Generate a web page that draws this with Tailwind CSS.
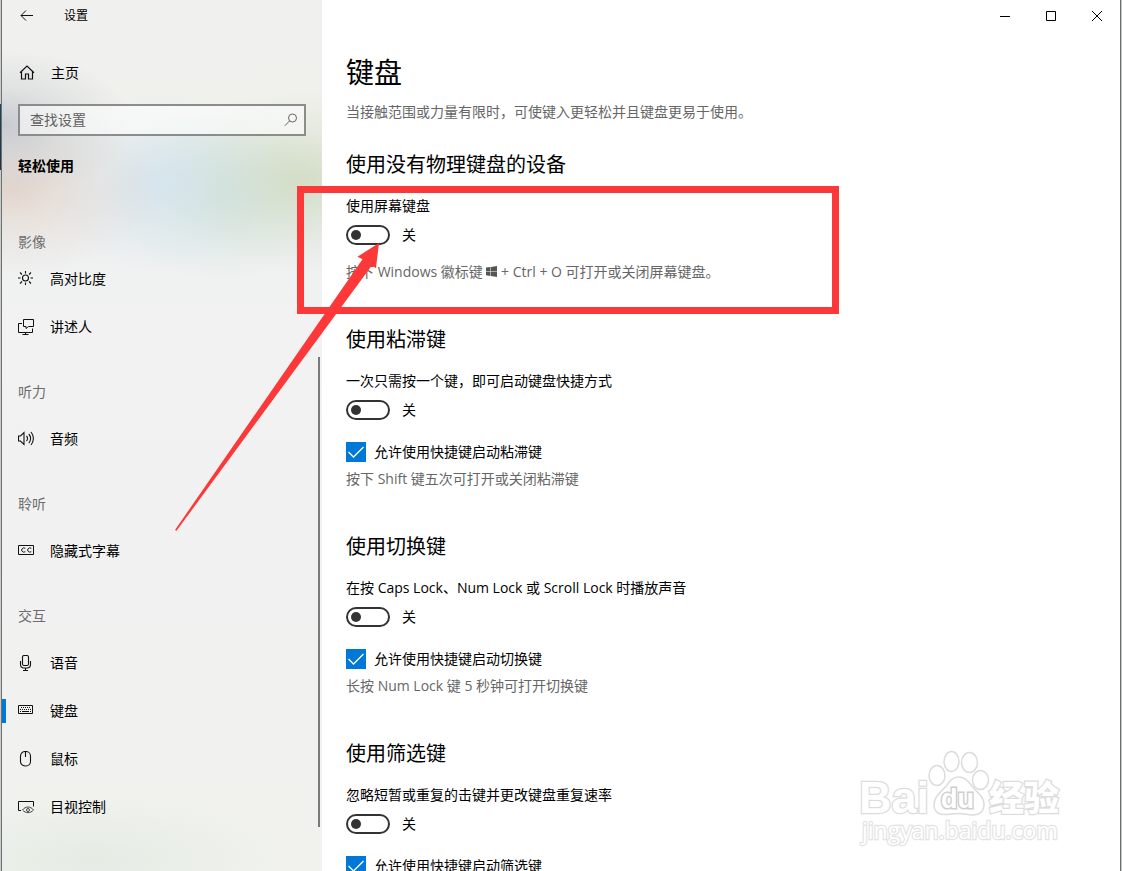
<!DOCTYPE html>
<html lang="zh-CN">
<head>
    <meta charset="UTF-8">
    <meta name="viewport" content="width=device-width, initial-scale=1.0">
    <title>设置</title>
    <script src="https://cdn.jsdelivr.net/npm/@tailwindcss/browser@4"></script>
</head>
<body class="relative flex h-screen overflow-hidden bg-white font-['Open_Sans','Noto_Sans_CJK_SC',sans-serif] text-sm text-black">
    <!-- Desktop showing at the window edge -->
    <div class="w-[2px] shrink-0 border-r border-[#6c7070] bg-[linear-gradient(#c9cdca_104px,#1f4560_104px,#243246_170px,#c9cdca_170px)]"></div>

    <!-- Sidebar -->
    <aside class="relative w-80 shrink-0 bg-[#f2f2f2] bg-[radial-gradient(130px_75px_at_0px_125px,#b4bac4aa,#b4bac444_50%,#b4bac400),radial-gradient(150px_85px_at_10px_190px,#e0cabcaa,#e0cabc44_50%,#e0cabc00),radial-gradient(120px_90px_at_160px_182px,#d3e3efcc,#d3e3ef55_50%,#d3e3ef00),radial-gradient(150px_90px_at_300px_180px,#cfd9bdcc,#cfd9bd55_50%,#cfd9bd00),radial-gradient(120px_90px_at_220px_190px,#cce2d9cc,#cce2d955_50%,#cce2d900),radial-gradient(200px_70px_at_90px_860px,#e5ece4,#e5ece400),linear-gradient(#f0f0ee,#f0f1ed_110px,#eceff0_200px,#f2f2f2_320px,#f1f1f1_600px,#f1f2ee_800px)]">
        <header class="flex h-8 items-center gap-[30px] pl-[18px]">
            <button type="button" aria-label="返回">
                <svg class="size-[14px]" viewBox="0 0 14 14" fill="none" stroke="#111"><path d="M13 6.500H1M6 1.500l-5 5 5 5"/></svg>
            </button>
            <span class="text-xs">设置</span>
        </header>

        <a href="#" class="mt-[17px] flex h-12 items-center gap-4 pl-[17px]">
            <svg class="size-4" viewBox="0 0 16 16" fill="none" stroke="#111" stroke-width="1.2"><path d="M1 7.800 8 1l7 6.800M2.500 6.500v7.500h4V9h3v5h4V6.500"/></svg>
            主页
        </a>

        <form class="mx-4 mt-[7px] flex h-8 items-center border-2 border-[#8a8d8a] bg-white/55 pr-[6px] pl-[10px]">
            <input type="search" aria-label="查找设置" placeholder="查找设置" class="min-w-0 flex-1 bg-transparent outline-none placeholder:text-[#616161]">
            <button type="submit" aria-label="搜索">
                <svg class="size-[14px]" viewBox="0 0 14 14" fill="none" stroke="#666"><circle cx="8.500" cy="5" r="4"/><path d="M5.700 7.800.800 12.800"/></svg>
            </button>
        </form>

        <h2 class="mt-5 pl-4 leading-5 font-bold">轻松使用</h2>

        <nav class="mt-[53px]">
            <h3 class="pl-4 leading-[26px] text-[#6d6d6d]">影像</h3>
            <a href="#" class="flex h-12 items-center gap-4 pl-4">
                <svg class="size-4" viewBox="0 0 16 16" fill="none" stroke="#111" stroke-width="1.1"><circle cx="7.500" cy="7" r="3"/><path d="M7.500 0v2.500M7.500 11.500V14M0 7h2.500M12.500 7H15M2 1.500l2 2M11 10.500l2 2M13 1.500l-2 2M4 10.500l-2 2"/></svg>
                高对比度
            </a>
            <a href="#" class="flex h-12 items-center gap-4 pl-4">
                <svg class="size-4" viewBox="0 0 16 16" fill="none" stroke="#111"><path d="M5.500.500h10v7h-5L8 9.500v-2H5.500zM4 4.500H.500v9h14v-4M7.500 13.500v2M4.500 15.500h6"/></svg>
                讲述人
            </a>

            <h3 class="mt-7 mb-[10px] pl-4 leading-[26px] text-[#6d6d6d]">听力</h3>
            <a href="#" class="flex h-12 items-center gap-4 pl-4">
                <svg class="-mr-px h-4 w-[17px]" viewBox="0 0 17 16" fill="none" stroke="#111" stroke-width="1.1"><path d="M.500 5h2L6 1.500v12L2.500 10h-2zM8.500 5a3.500 3.500 0 0 1 0 5M10.800 3a6.500 6.500 0 0 1 0 9M13 1a10 10 0 0 1 0 13"/></svg>
                音频
            </a>

            <h3 class="mt-7 mb-[10px] pl-4 leading-[26px] text-[#6d6d6d]">聆听</h3>
            <a href="#" class="flex h-12 items-center gap-4 pl-4">
                <svg class="size-4" viewBox="0 0 16 16" fill="none" stroke="#111"><path d="M.500 2.500h15v9H.500z"/><path d="M7.300 5.300A2.300 2.100 0 1 0 7.300 8.700M13.300 5.300A2.300 2.100 0 1 0 13.300 8.700"/></svg>
                隐藏式字幕
            </a>

            <h3 class="mt-7 mb-[10px] pl-4 leading-[26px] text-[#6d6d6d]">交互</h3>
            <a href="#" class="flex h-12 items-center gap-4 pl-4">
                <svg class="size-4" viewBox="0 0 16 16" fill="none" stroke="#111" stroke-width="1.1"><rect x="4.500" y=".500" width="6" height="10" rx="1.500"/><path d="M2.500 6v3.500c0 2 1.500 3.500 3.500 3.500h3c2 0 3.500-1.500 3.500-3.500V6M7.500 13v2.500M5 15.500h5"/></svg>
                语音
            </a>
            <a href="#" aria-current="page" class="flex h-12 items-center">
                <span class="h-6 w-1 bg-[#0078d7]"></span>
                <svg class="mr-4 ml-3 size-4" viewBox="0 0 16 16" fill="none" stroke="#111"><path d="M.500 2.500h14v8H.500z"/><path stroke-dasharray="1 1" d="M3 4.500h10M2 6.500h11"/><path d="M2 8.500h1M4 8.500h7M12 8.500h1"/></svg>
                键盘
            </a>
            <a href="#" class="flex h-12 items-center gap-4 pl-4">
                <svg class="size-4" viewBox="0 0 16 16" fill="none" stroke="#111" stroke-width="1.1"><rect x="2.500" y=".500" width="10" height="14.500" rx="4.500"/><path d="M7.500 1v5"/></svg>
                鼠标
            </a>
            <a href="#" class="flex h-12 items-center gap-4 pl-4">
                <svg class="size-4" viewBox="0 0 16 16" fill="none" stroke="#111"><path d="M3 11.500H.500v-9h15v5"/><path stroke="#444" d="M4.500 11c3-4 8-4 11 0-3 3.500-8 3.500-11 0z"/><circle cx="10" cy="11" r="1.500" stroke="#444"/></svg>
                目视控制
            </a>
        </nav>

        <div class="absolute top-[357px] right-[2px] h-[470px] w-[2px] bg-[#7a7a7a]"></div>
    </aside>

    <!-- Content -->
    <main class="min-w-0 flex-1">
        <div class="flex h-8 justify-end">
            <button type="button" aria-label="最小化" class="grid w-[46px] place-items-center">
                <svg class="size-[10px]" viewBox="0 0 10 10" stroke="#000"><path d="M0 5.500h10"/></svg>
            </button>
            <button type="button" aria-label="最大化" class="grid w-[46px] place-items-center">
                <svg class="size-[10px]" viewBox="0 0 10 10" fill="none" stroke="#000"><path d="M.500.500h9v9h-9z"/></svg>
            </button>
            <button type="button" aria-label="关闭" class="grid w-[46px] place-items-center">
                <svg class="size-[10px]" viewBox="0 0 10 10" stroke="#000"><path d="m0 0 10 10M10 0 0 10"/></svg>
            </button>
        </div>

        <div class="px-6 pt-[22px] leading-5">
            <h1 class="text-[28px] leading-9">键盘</h1>
            <p class="mt-3 text-[#666]">当接触范围或力量有限时，可使键入更轻松并且键盘更易于使用。</p>

            <section class="mt-7">
                <h2 class="text-xl leading-[30px]">使用没有物理键盘的设备</h2>
                <label for="osk" class="mt-4 block">使用屏幕键盘</label>
                <div class="mt-[9px] flex h-5 items-center gap-3">
                    <input type="checkbox" role="switch" id="osk" class="flex h-5 w-11 appearance-none items-center rounded-full border-2 border-[#333] pl-[3px] before:size-[10px] before:rounded-full before:bg-[#333]">
                    <span>关</span>
                </div>
                <p class="mt-[17px] text-[#666]">按下 Windows 徽标键 <svg class="inline-block size-[11px] align-baseline" viewBox="0 0 11 11" fill="#555"><path d="M0 1.500 4.500 1v4H0zM5 .900 11 0v5H5zM0 5.600h4.500v4.300L0 9.300zM5 5.600h6V11l-6-.900z"/></svg> + Ctrl + O 可打开或关闭屏幕键盘。</p>
            </section>

            <section class="mt-[43px]">
                <h2 class="text-xl leading-[30px]">使用粘滞键</h2>
                <label for="sticky" class="mt-4 block">一次只需按一个键，即可启动键盘快捷方式</label>
                <div class="mt-[9px] flex h-5 items-center gap-3">
                    <input type="checkbox" role="switch" id="sticky" class="flex h-5 w-11 appearance-none items-center rounded-full border-2 border-[#333] pl-[3px] before:size-[10px] before:rounded-full before:bg-[#333]">
                    <span>关</span>
                </div>
                <label class="mt-[22px] flex h-5 items-center gap-2">
                    <span class="grid size-5">
                        <input type="checkbox" checked class="col-start-1 row-start-1 size-5 appearance-none bg-[#0078d7]">
                        <svg class="pointer-events-none col-start-1 row-start-1 size-5" viewBox="0 0 20 20" fill="none" stroke="#fff" stroke-width="1.3"><path d="m2.500 10 5 5L17.500 5"/></svg>
                    </span>
                    允许使用快捷键启动粘滞键
                </label>
                <p class="mt-[7px] text-[#666]">按下 Shift 键五次可打开或关闭粘滞键</p>
            </section>

            <section class="mt-[43px]">
                <h2 class="text-xl leading-[30px]">使用切换键</h2>
                <label for="togglekeys" class="mt-4 block">在按 Caps Lock、Num Lock 或 Scroll Lock 时播放声音</label>
                <div class="mt-[9px] flex h-5 items-center gap-3">
                    <input type="checkbox" role="switch" id="togglekeys" class="flex h-5 w-11 appearance-none items-center rounded-full border-2 border-[#333] pl-[3px] before:size-[10px] before:rounded-full before:bg-[#333]">
                    <span>关</span>
                </div>
                <label class="mt-[22px] flex h-5 items-center gap-2">
                    <span class="grid size-5">
                        <input type="checkbox" checked class="col-start-1 row-start-1 size-5 appearance-none bg-[#0078d7]">
                        <svg class="pointer-events-none col-start-1 row-start-1 size-5" viewBox="0 0 20 20" fill="none" stroke="#fff" stroke-width="1.3"><path d="m2.500 10 5 5L17.500 5"/></svg>
                    </span>
                    允许使用快捷键启动切换键
                </label>
                <p class="mt-[7px] text-[#666]">长按 Num Lock 键 5 秒钟可打开切换键</p>
            </section>

            <section class="mt-[43px]">
                <h2 class="text-xl leading-[30px]">使用筛选键</h2>
                <label for="filter" class="mt-4 block">忽略短暂或重复的击键并更改键盘重复速率</label>
                <div class="mt-[9px] flex h-5 items-center gap-3">
                    <input type="checkbox" role="switch" id="filter" class="flex h-5 w-11 appearance-none items-center rounded-full border-2 border-[#333] pl-[3px] before:size-[10px] before:rounded-full before:bg-[#333]">
                    <span>关</span>
                </div>
                <label class="mt-[22px] flex h-5 items-center gap-2">
                    <span class="grid size-5">
                        <input type="checkbox" checked class="col-start-1 row-start-1 size-5 appearance-none bg-[#0078d7]">
                        <svg class="pointer-events-none col-start-1 row-start-1 size-5" viewBox="0 0 20 20" fill="none" stroke="#fff" stroke-width="1.3"><path d="m2.500 10 5 5L17.500 5"/></svg>
                    </span>
                    允许使用快捷键启动筛选键
                </label>
            </section>
        </div>
    </main>

    <div class="w-[2px] shrink-0 border-l border-[#6c7070] bg-[#c4c6c6]"></div>

    <!-- Red box and arrow -->
    <div class="pointer-events-none absolute top-[186px] left-[297px] h-32 w-[542px] border-7 border-[#fc3838]"></div>
    <svg class="pointer-events-none absolute top-[240px] left-[170px] h-[300px] w-[220px]" viewBox="170 240 220 300" fill="#fc3838"><path d="m379 243-21.500 13.700 5 2.500L175 530l1.500.800L371.500 266l4.500 2z"/></svg>

    <!-- Watermark -->
    <svg class="pointer-events-none absolute right-[52px] bottom-[18px] h-[108px] w-[220px]" viewBox="850 745 220 108" fill="#fff" stroke="#dcdcdc" stroke-width="1.5">
        <g stroke-width="2.500" paint-order="stroke" font-family="Liberation Sans, sans-serif" font-weight="700">
            <text x="859" y="813" font-size="45">Bai</text>
            <text x="989" y="811" font-size="35" font-family="Noto Sans CJK SC, sans-serif" font-weight="900">经验</text>
            <text x="862" y="839" font-size="23" stroke="#e4e4e4" font-family="Open Sans, sans-serif" font-weight="400">jingyan.baidu.com</text>
        </g>
        <ellipse cx="937" cy="775.500" rx="8" ry="10"/>
        <ellipse cx="951.500" cy="761.500" rx="7.500" ry="10"/>
        <ellipse cx="969.500" cy="762.500" rx="8" ry="10"/>
        <ellipse cx="980.500" cy="780" rx="8" ry="9.500"/>
        <path d="M958.500 777c-6 0-9 4-12 8.500-4 5.500-13 10.500-12.500 20 .500 7 6 9.500 12 9 5-.500 8-1 12.500-1s8 1 13 1.500c6 .500 12-2 12.500-10 .500-9-8-13-12.500-19.500-3-4.500-7-8.500-13-8.500z"/>
        <text x="941" y="808" font-size="27" stroke="#cfcfcf" stroke-width="3" paint-order="stroke" font-family="Liberation Sans, sans-serif" font-weight="700">du</text>
    </svg>
</body>
</html>
